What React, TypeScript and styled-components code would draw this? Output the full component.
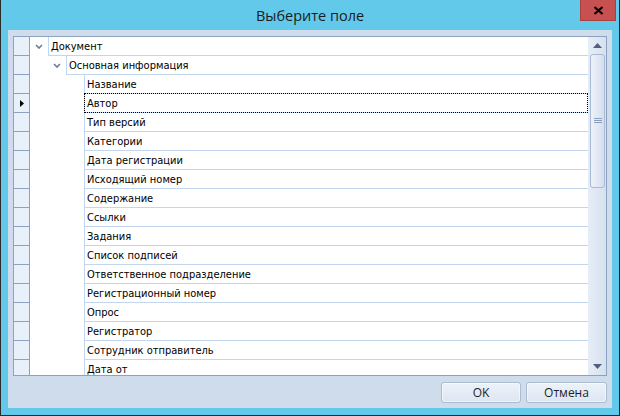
import React from "react";
import styled, { createGlobalStyle } from "styled-components";

const Global = createGlobalStyle`
  html, body { margin: 0; padding: 0; background: #ffffff; }
  * { box-sizing: border-box; }
`;

const Window = styled.div`
  width: 620px;
  height: 416px;
  background: #63c9ea;
  border: 1px solid #2b2b2b;
  border-top: none;
  display: flex;
  flex-direction: column;
  font-family: "Open Sans", "Noto Sans", sans-serif;
`;

const TitleBar = styled.div`
  height: 30px;
  display: grid;
  grid-template-columns: 1fr auto 1fr;
`;

const Title = styled.div`
  grid-column: 2;
  align-self: center;
  font-size: 14.5px;
  color: #1b1b1b;
  padding-top: 1px;
`;

const CloseButton = styled.div`
  grid-column: 3;
  justify-self: end;
  align-self: start;
  width: 36px;
  height: 21px;
  margin-right: 3px;
  background: #c75050;
  border: 1px solid #a9423f;
  border-top: none;
  display: flex;
  align-items: center;
  justify-content: center;
`;

const Panel = styled.div`
  flex: 1;
  margin: 0 7px 7px 7px;
  background: #cfdcec;
  padding: 6px 5px 5px 5px;
  display: flex;
  flex-direction: column;
  gap: 6px;
`;

const Grid = styled.div`
  height: 340px;
  border: 1px solid #8da2c0;
  background: #ffffff;
  display: flex;
`;

const Rows = styled.div`
  flex: 1;
  overflow: hidden;
  display: flex;
  flex-direction: column;
`;

const Row = styled.div`
  height: 19px;
  flex: none;
  display: flex;
`;

const RowHeader = styled.div`
  width: 16px;
  flex: none;
  background: #e8f0fa;
  border-right: 1px solid #8da2c0;
  border-bottom: 1px solid #8da2c0;
  display: flex;
  align-items: center;
  justify-content: center;
  padding-left: 1px;
`;

const Indent = styled.div<{ $level: number }>`
  width: ${(p) => p.$level * 18}px;
  flex: none;
`;

const Expander = styled.div`
  width: 18px;
  flex: none;
  display: flex;
  align-items: center;
  justify-content: center;
`;

const Cell = styled.div<{ $focused?: boolean }>`
  flex: 1;
  position: relative;
  border-left: 1px solid #c3d6ef;
  border-bottom: 1px solid #c3d6ef;
  padding: 1px 0 0 2px;
  font-family: "DejaVu Sans Condensed", "DejaVu Sans", sans-serif;
  font-size: 11px;
  line-height: 17px;
  color: #000000;
  white-space: nowrap;
  ${(p) =>
    p.$focused
      ? `&::after {
    content: "";
    position: absolute;
    left: -1px;
    right: 0;
    top: -1px;
    bottom: -1px;
    border: 1px dotted #000000;
  }`
      : ""}
`;

const Scrollbar = styled.div`
  width: 18px;
  flex: none;
  background: linear-gradient(to right, #e6edf7, #d6e1ef);
  display: flex;
  flex-direction: column;
`;

const ArrowButton = styled.div`
  height: 17px;
  flex: none;
  display: flex;
  align-items: center;
  justify-content: center;
`;

const Track = styled.div`
  flex: 1;
  padding: 0 1px 0 2px;
`;

const Thumb = styled.div`
  height: 134px;
  border: 1px solid #a8bad4;
  border-radius: 3px;
  background: linear-gradient(to right, #eef3fa, #d4dfed);
  display: flex;
  align-items: center;
  justify-content: center;
`;

const Buttons = styled.div`
  display: flex;
  justify-content: flex-end;
  gap: 5px;
`;

const Button = styled.div<{ $w: number }>`
  width: ${(p) => p.$w}px;
  height: 21px;
  border: 1px solid #acbbd2;
  border-radius: 3px;
  background: linear-gradient(#edf2f9, #dce6f2);
  box-shadow: inset 0 0 0 1px rgba(255, 255, 255, 0.55);
  display: flex;
  align-items: center;
  justify-content: center;
  font-size: 12px;
  color: #1e1e1e;
`;

const Chevron = () => (
  <svg width="8" height="5" viewBox="0 0 8 5">
    <path d="M1 1 L4 4 L7 1" fill="none" stroke="#6b7b93" strokeWidth="1.6" />
  </svg>
);

const CurrentMark = () => (
  <svg width="4" height="7" viewBox="0 0 4 7">
    <path d="M0 0 L4 3.5 L0 7 Z" fill="#000000" />
  </svg>
);

const CloseGlyph = () => (
  <svg width="11" height="9" viewBox="0 0 11 9">
    <path d="M1.5 1 L9.5 8 M9.5 1 L1.5 8" stroke="#000000" strokeWidth="2.2" />
  </svg>
);

const UpArrow = () => (
  <svg width="9" height="5" viewBox="0 0 9 5">
    <path d="M0 5 L4.5 0 L9 5 Z" fill="#4f5f80" />
  </svg>
);

const DownArrow = () => (
  <svg width="9" height="5" viewBox="0 0 9 5">
    <path d="M0 0 L4.5 5 L9 0 Z" fill="#4f5f80" />
  </svg>
);

const Grip = () => (
  <svg width="8" height="6" viewBox="0 0 8 6">
    <path d="M0 0.5 H8 M0 2.5 H8 M0 4.5 H8" stroke="#8a9fbe" strokeWidth="1" />
  </svg>
);

type Node = { label: string; level: number; expandable?: boolean };

const nodes: Node[] = [
  { label: "Документ", level: 0, expandable: true },
  { label: "Основная информация", level: 1, expandable: true },
  ...[
    "Название",
    "Автор",
    "Тип версий",
    "Категории",
    "Дата регистрации",
    "Исходящий номер",
    "Содержание",
    "Ссылки",
    "Задания",
    "Список подписей",
    "Ответственное подразделение",
    "Регистрационный номер",
    "Опрос",
    "Регистратор",
    "Сотрудник отправитель",
    "Дата от",
  ].map((label) => ({ label, level: 2 })),
];

const FOCUSED = 3;

export default function App() {
  return (
    <>
      <Global />
      <Window>
        <TitleBar>
          <Title>Выберите поле</Title>
          <CloseButton>
            <CloseGlyph />
          </CloseButton>
        </TitleBar>
        <Panel>
          <Grid>
            <Rows>
              {nodes.map((n, i) => (
                <Row key={i}>
                  <RowHeader>{i === FOCUSED ? <CurrentMark /> : null}</RowHeader>
                  <Indent $level={n.level} />
                  <Expander>{n.expandable ? <Chevron /> : null}</Expander>
                  <Cell $focused={i === FOCUSED}>{n.label}</Cell>
                </Row>
              ))}
            </Rows>
            <Scrollbar>
              <ArrowButton>
                <UpArrow />
              </ArrowButton>
              <Track>
                <Thumb>
                  <Grip />
                </Thumb>
              </Track>
              <ArrowButton>
                <DownArrow />
              </ArrowButton>
            </Scrollbar>
          </Grid>
          <Buttons>
            <Button $w={80}>OK</Button>
            <Button $w={81}>Отмена</Button>
          </Buttons>
        </Panel>
      </Window>
    </>
  );
}
